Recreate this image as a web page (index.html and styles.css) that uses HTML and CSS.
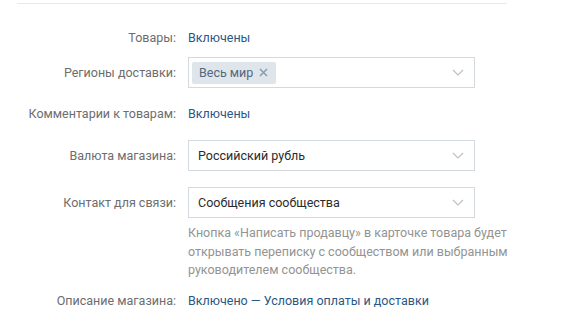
FILE: index.html
```html
<!DOCTYPE html>
<html lang="ru">
<head>
  <meta charset="UTF-8">
  <title>Настройки магазина</title>
  <link rel="stylesheet" href="styles.css">
</head>
<body>
  <div class="settings">
    <div class="divider"></div>

    <div class="row row-text first">
      <div class="label">Товары:</div>
      <div class="value"><a class="link" href="#">Включены</a></div>
    </div>

    <div class="row row-select tight">
      <div class="label">Регионы доставки:</div>
      <div class="value">
        <div class="select">
          <span class="chip">Весь мир
            <svg class="chip-x" width="9" height="9" viewBox="0 0 9 9"><path d="M1 1l7 7M8 1l-7 7" fill="none" stroke="#8a9bae" stroke-width="1.5"/></svg>
          </span>
          <svg class="chevron" width="12" height="7" viewBox="0 0 12 7"><path d="M1 1l5 5 5-5" fill="none" stroke="#b8bfc7" stroke-width="1.1"/></svg>
        </div>
      </div>
    </div>

    <div class="row row-text">
      <div class="label">Комментарии к товарам:</div>
      <div class="value"><a class="link" href="#">Включены</a></div>
    </div>

    <div class="row row-select">
      <div class="label">Валюта магазина:</div>
      <div class="value">
        <div class="select">
          <span class="select-text">Российский рубль</span>
          <svg class="chevron" width="12" height="7" viewBox="0 0 12 7"><path d="M1 1l5 5 5-5" fill="none" stroke="#b8bfc7" stroke-width="1.1"/></svg>
        </div>
      </div>
    </div>

    <div class="row row-select">
      <div class="label">Контакт для связи:</div>
      <div class="value">
        <div class="select">
          <span class="select-text">Сообщения сообщества</span>
          <svg class="chevron" width="12" height="7" viewBox="0 0 12 7"><path d="M1 1l5 5 5-5" fill="none" stroke="#b8bfc7" stroke-width="1.1"/></svg>
        </div>
      </div>
    </div>

    <div class="row hint-row">
      <div class="label"></div>
      <div class="hint">Кнопка «Написать продавцу» в карточке товара будет открывать переписку с сообществом или выбранным руководителем сообщества.</div>
    </div>

    <div class="row row-text last">
      <div class="label">Описание магазина:</div>
      <div class="value"><a class="link" href="#">Включено</a> <span class="dash">—</span> <a class="link" href="#">Условия оплаты и доставки</a></div>
    </div>
  </div>
</body>
</html>
```

FILE: styles.css
```css
body {
  margin: 0;
  background: #fff;
  font-family: Roboto, "Open Sans", Arial, sans-serif;
  font-size: 12.5px;
  color: #2b2b2b;
}
.settings {
  width: 577px;
  padding-top: 3px;
}
.divider {
  margin: 0 70px 0 17px;
  border-top: 1px solid #e7e8ec;
}
.row {
  display: grid;
  grid-template-columns: 176px 1fr;
  column-gap: 12px;
  align-items: center;
  margin-top: 16px;
}
.row.first {
  margin-top: 24px;
}
.row.tight {
  margin-top: 9px;
}
.row-text {
  height: 20px;
  line-height: 20px;
}
.label {
  text-align: right;
  color: #6d6d6d;
  white-space: nowrap;
}
.link {
  color: #2a5885;
  text-decoration: none;
}
.dash {
  color: #2a5885;
}
.select {
  box-sizing: border-box;
  width: 287px;
  height: 31px;
  border: 1px solid #d3d9de;
  display: flex;
  align-items: center;
  padding: 0 10px 0 3px;
}
.select-text {
  padding-left: 6px;
  flex: 1;
}
.chip {
  display: flex;
  align-items: center;
  height: 22px;
  background: #dee5eb;
  color: #55677d;
  padding: 0 8px 0 7px;
  border-radius: 2px;
  white-space: nowrap;
  margin-right: auto;
}
.chip-x {
  margin-left: 6px;
}
.chevron {
  flex: none;
  display: block;
}
.hint-row {
  margin-top: 6px;
  align-items: start;
}
.hint {
  width: 340px;
  color: #939393;
  line-height: 18.5px;
}
.row.last {
  margin-top: 11px;
}
```
